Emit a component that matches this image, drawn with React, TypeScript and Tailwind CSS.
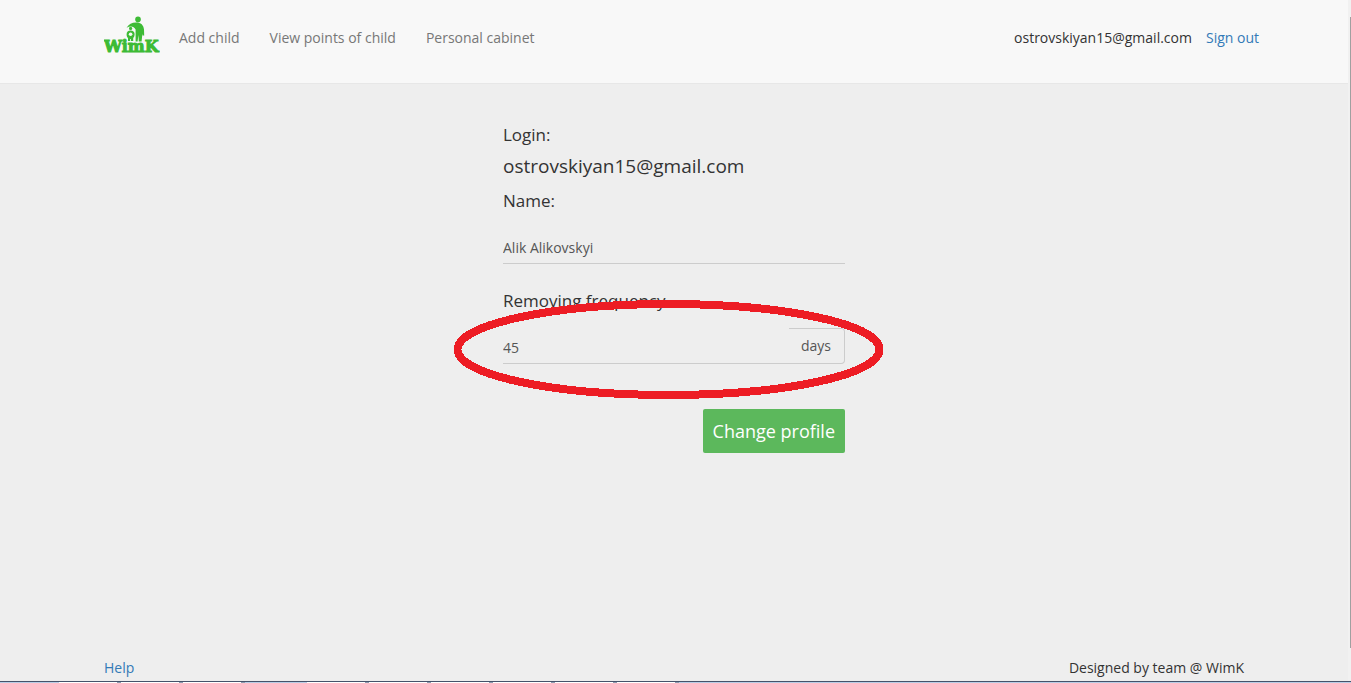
function Logo() {
  return (
    <svg width="56" height="40" viewBox="0 0 56 40" fill="#3dbb35" role="img" aria-label="WimK">
      <circle cx="34" cy="3.4" r="2.8" />
      <path d="M22.6 11.8C24.6 8 28 6.4 32 6.4C37 6.4 39.6 9 40 13.5L40.2 19.5H38.6L38.4 17.5L37.6 25.4H34.8L34.4 19L33.6 25.4H31.6V13.4C30 10.4 26.6 9.6 22.6 11.8Z" />
      <circle cx="26.6" cy="12.4" r="1.6" />
      <path d="M26.6 14.5C24 14.5 22.6 16 22.6 18.5C22.6 20.5 23.3 21.3 24 22V25H26.2V23H27V25H29.2V22C30 21 30.6 20 30.6 18C30.6 16 29 14.5 26.6 14.5Z" />
      <circle cx="26.6" cy="18.3" r="1.8" fill="#f8f8f8" />
      <text x="0" y="36" fontFamily="DejaVu Serif, serif" fontWeight="700" fontSize="16" stroke="#3dbb35" strokeWidth="1">
        WimK
      </text>
    </svg>
  );
}

function TaskButton() {
  return <span className="w-[62px] border-r-4 border-[#8d9cb0] bg-white" />;
}

export default function App() {
  return (
    <div className="flex min-h-screen flex-col bg-[#eeeeee] font-['Open_Sans',sans-serif] text-sm leading-5 text-[#333333]">
      <div className="flex grow">
        <div className="flex min-w-0 grow flex-col">
          <header className="border-b border-[#e7e7e7] bg-[#f8f8f8]">
            <div className="mx-auto flex h-[83px] max-w-[1170px] items-start pl-[15px]">
              <a href="#home" className="pt-4">
                <Logo />
              </a>
              <nav className="flex gap-[30px] pt-7 pl-[19px] text-[#777777]">
                <a href="#add">Add child</a>
                <a href="#points">View points of child</a>
                <a href="#cabinet">Personal cabinet</a>
              </nav>
              <div className="ml-auto flex gap-[14px] pt-7">
                <span>ostrovskiyan15@gmail.com</span>
                <a href="#signout" className="text-[#337ab7]">Sign out</a>
              </div>
            </div>
          </header>

          <main className="mx-auto w-full max-w-[342px] grow pt-[39px]">
            <form>
              <p className="text-[17px] leading-6">Login:</p>
              <p className="mt-1 text-[19px] leading-[30px]">ostrovskiyan15@gmail.com</p>
              <label htmlFor="name" className="mt-2 block text-[17px] leading-6">Name:</label>
              <input
                id="name"
                defaultValue="Alik Alikovskyi"
                className="mt-5 block h-[31px] w-full border-b border-[#cccccc] pb-0.5 text-[#555555] outline-none"
              />
              <div className="relative mt-[25px]">
                <label htmlFor="frequency" className="block text-[17px] leading-6">Removing frequency</label>
                <div className="mt-[15px] flex h-9">
                  <input
                    id="frequency"
                    defaultValue="45"
                    className="min-w-0 grow border-b border-[#cccccc] pt-1 text-[#555555] outline-none"
                  />
                  <span className="rounded-r border border-l-0 border-[#cccccc] pt-[7px] pr-[13px] pl-3 text-[#555555]">days</span>
                </div>
                <svg
                  className="pointer-events-none absolute top-[11px] -left-[49px]"
                  width="430"
                  height="100"
                  viewBox="0 0 430 100"
                  fill="none"
                  shapeRendering="crispEdges"
                  aria-hidden="true"
                >
                  <ellipse cx="214.5" cy="49.5" rx="211" ry="45.5" stroke="#ed1c24" strokeWidth="8" />
                </svg>
              </div>
              <div className="mt-[45px] flex justify-end">
                <button type="button" className="h-11 rounded-xs bg-[#5cb85c] px-[10px] text-lg text-white">
                  Change profile
                </button>
              </div>
            </form>
          </main>

          <footer className="mx-auto flex w-full max-w-[1140px] justify-between pb-[3px]">
            <a href="#help" className="text-[#337ab7]">Help</a>
            <span>Designed by team @ WimK</span>
          </footer>
        </div>
        <div className="flex w-[3px] justify-end bg-[#f1f1f1] pt-[17px] pb-[33px]">
          <div className="w-px bg-[#a0a0a0]" />
        </div>
      </div>
      <div className="flex h-[2px] border-t border-[#45526a] bg-[#b9cde5] pl-[59px]">
        <TaskButton />
        <TaskButton />
        <TaskButton />
        <span className="w-[62px]" />
        <TaskButton />
        <TaskButton />
        <TaskButton />
        <TaskButton />
        <TaskButton />
        <TaskButton />
      </div>
    </div>
  );
}
